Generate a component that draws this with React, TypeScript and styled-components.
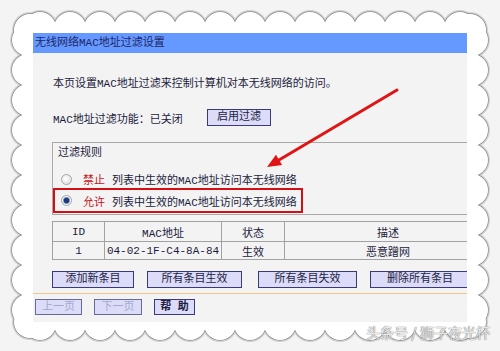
import React from 'react'
import styled, { createGlobalStyle } from 'styled-components'

const GlobalStyle = createGlobalStyle`
  html, body {
    margin: 0;
    padding: 0;
  }
  body {
    background: #f4f4f4;
    font-family: "Liberation Mono", "Noto Sans CJK SC", monospace;
    color: #1c1c3c;
  }
`

const Page = styled.div`
  position: relative;
  width: 500px;
  height: 351px;
  overflow: hidden;
  box-sizing: border-box;
  padding: 33px 33px 0;
  background: #f4f4f4;
`

const FrameArt = styled.svg`
  position: absolute;
  left: 0;
  top: 0;
  width: 500px;
  height: 351px;
`

const Panel = styled.div`
  position: relative;
  width: 434px;
  background: #f3f3f3;
  overflow: hidden;
  font-size: 11px;
`

const TitleBar = styled.div`
  height: 20px;
  line-height: 20px;
  padding-left: 2px;
  background: #6699ff;
  color: #1c2668;
  white-space: nowrap;
`

const Body = styled.div`
  padding-left: 19px;
`

const Intro = styled.p`
  margin: 23px 0 0 1px;
  line-height: 16px;
  white-space: nowrap;
`

const StatusRow = styled.div`
  display: flex;
  align-items: center;
  margin-top: 17px;
  height: 17px;
  padding-left: 1px;
`

const StatusLabel = styled.span`
  width: 154px;
  white-space: nowrap;
`

const ActionButton = styled.button<{ $w: number; $gap?: number }>`
  width: ${p => p.$w}px;
  height: 17px;
  margin: 0 0 0 ${p => p.$gap ?? 0}px;
  padding: 0;
  flex: none;
  background: #dcdcf8;
  border: 1px solid #3a3a78;
  color: #1c1c44;
  font-family: inherit;
  font-size: 11px;
  line-height: 15px;
`

const RuleBox = styled.div`
  margin-top: 16px;
  width: 460px;
  border: 1px solid #a9a9a9;
  border-right: none;
  padding: 2px 0 1px;
`

const RuleTitle = styled.div`
  line-height: 16px;
  padding-left: 5px;
`

const RuleRow = styled.div<{ $boxed?: boolean }>`
  display: flex;
  align-items: center;
  white-space: nowrap;
  box-sizing: border-box;
  height: ${p => (p.$boxed ? 25 : 16)}px;
  width: ${p => (p.$boxed ? '250px' : 'auto')};
  margin-top: ${p => (p.$boxed ? 1 : 10)}px;
  padding-left: ${p => (p.$boxed ? 6 : 8)}px;
  border: ${p => (p.$boxed ? '2px solid #d20f14' : 'none')};
`

const Radio = styled.span<{ $checked?: boolean }>`
  width: 11px;
  height: 11px;
  box-sizing: border-box;
  border-radius: 50%;
  border: 1px solid #a4a4a4;
  margin-right: 11px;
  flex: none;
  background: ${p =>
    p.$checked
      ? 'radial-gradient(circle, #1d3a80 0 2.4px, #7c90b8 3px, #f4f6fa 4px)'
      : 'radial-gradient(circle at 40% 40%, #ffffff, #d8d8d8)'};
`

const Keyword = styled.span`
  color: #c8121a;
  margin-right: 7px;
`

const RuleTable = styled.table`
  margin-top: 6px;
  width: 440px;
  border-collapse: collapse;
  font-size: 11px;
  table-layout: fixed;

  td {
    border: 1px solid #a2a2a2;
    text-align: center;
    padding: 0;
    white-space: nowrap;
  }
`

const HeadRow = styled.tr`
  height: 20px;
`

const DataRow = styled.tr`
  height: 18px;
`

const ButtonRow = styled.div`
  display: flex;
  margin-top: 11px;
`

const Footer = styled.div`
  display: flex;
  gap: 12px;
  margin-top: 5px;
  border-top: 1px solid #f0c88c;
  padding: 5px 0 7px 2px;
`

const NavButton = styled.button<{ $w: number; $disabled?: boolean }>`
  width: ${p => p.$w}px;
  height: 16px;
  padding: 0;
  margin: 0;
  background: #dcdcf8;
  border: 1px solid ${p => (p.$disabled ? '#6a6a9a' : '#3a3a78')};
  color: ${p => (p.$disabled ? '#a3a9cf' : '#1c1c44')};
  font-family: inherit;
  font-size: 11px;
  font-weight: ${p => (p.$disabled ? 'normal' : 'bold')};
  line-height: 14px;
`

const Arrow = styled.svg`
  position: absolute;
  left: 0;
  top: 0;
  width: 500px;
  height: 351px;
  pointer-events: none;
`

const Watermark = styled.div`
  position: absolute;
  right: 10px;
  bottom: 9px;
  font-family: "Noto Sans CJK SC", sans-serif;
  font-size: 14px;
  color: rgba(255, 255, 255, 0.85);
  text-shadow: 0 0 1px #666, 0 0 1px #888;
  white-space: nowrap;
`

const ScallopFrame = () => {
  const circles: [number, number][] = []
  for (let x = 40; x <= 460; x += 30) {
    circles.push([x, 28])
    circles.push([x, 324])
  }
  for (let y = 40; y <= 310; y += 30) {
    circles.push([28, y])
    circles.push([472, y])
  }
  circles.push([30, 30], [470, 30], [30, 322], [470, 322])
  return (
    <FrameArt viewBox="0 0 500 351">
      {circles.map(([cx, cy], i) => (
        <circle key={'s' + i} cx={cx} cy={cy} r={16} fill="none" stroke="#d2d2d2" strokeWidth={4} />
      ))}
      {circles.map(([cx, cy], i) => (
        <circle key={'o' + i} cx={cx} cy={cy} r={16} fill="none" stroke="#8c8c8c" strokeWidth={1.4} />
      ))}
      {circles.map(([cx, cy], i) => (
        <circle key={'f' + i} cx={cx} cy={cy} r={16} fill="#fff" />
      ))}
      <rect x={28} y={28} width={444} height={296} fill="#fff" />
    </FrameArt>
  )
}

export default function App() {
  return (
    <Page>
      <GlobalStyle />
      <ScallopFrame />
      <Panel>
        <TitleBar>无线网络MAC地址过滤设置</TitleBar>
        <Body>
          <Intro>本页设置MAC地址过滤来控制计算机对本无线网络的访问。</Intro>
          <StatusRow>
            <StatusLabel>MAC地址过滤功能：已关闭</StatusLabel>
            <ActionButton $w={64}>启用过滤</ActionButton>
          </StatusRow>
          <RuleBox>
            <RuleTitle>过滤规则</RuleTitle>
            <RuleRow>
              <Radio />
              <Keyword>禁止</Keyword>
              列表中生效的MAC地址访问本无线网络
            </RuleRow>
            <RuleRow $boxed>
              <Radio $checked />
              <Keyword>允许</Keyword>
              列表中生效的MAC地址访问本无线网络
            </RuleRow>
          </RuleBox>
          <RuleTable>
            <colgroup>
              <col style={{ width: 52 }} />
              <col style={{ width: 117 }} />
              <col style={{ width: 63 }} />
              <col />
            </colgroup>
            <tbody>
              <HeadRow>
                <td>ID</td>
                <td>MAC地址</td>
                <td>状态</td>
                <td>描述</td>
              </HeadRow>
              <DataRow>
                <td>1</td>
                <td>04-02-1F-C4-8A-84</td>
                <td>生效</td>
                <td>恶意蹭网</td>
              </DataRow>
            </tbody>
          </RuleTable>
          <ButtonRow>
            <ActionButton $w={82}>添加新条目</ActionButton>
            <ActionButton $w={95} $gap={13}>所有条目生效</ActionButton>
            <ActionButton $w={99} $gap={16}>所有条目失效</ActionButton>
            <ActionButton $w={100} $gap={13}>删除所有条目</ActionButton>
          </ButtonRow>
        </Body>
        <Footer>
          <NavButton $w={47} $disabled>上一页</NavButton>
          <NavButton $w={48} $disabled>下一页</NavButton>
          <NavButton $w={41}>帮 助</NavButton>
        </Footer>
      </Panel>
      <Arrow viewBox="0 0 500 351">
        <line x1={397} y1={90} x2={279} y2={160} stroke="#e01414" strokeWidth={3} strokeLinecap="round" />
        <polygon points="267,167 282.1,165 276,154.7" fill="#e01414" />
      </Arrow>
      <Watermark>头条号 / 狮子夜光杯</Watermark>
    </Page>
  )
}
